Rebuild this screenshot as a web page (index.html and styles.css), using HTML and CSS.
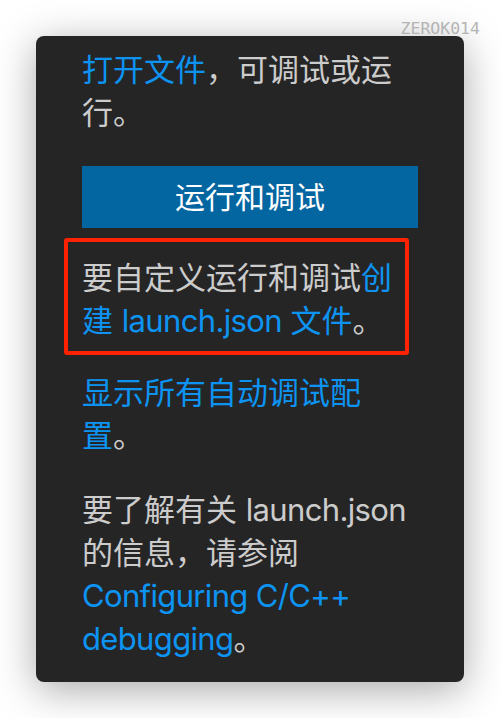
FILE: index.html
```html
<!DOCTYPE html>
<html lang="zh-CN">
<head>
<meta charset="utf-8">
<link rel="stylesheet" href="styles.css">
</head>
<body>
<div class="stage">
  <div class="watermark">ZEROK014</div>
  <div class="panel">
    <p class="para"><a class="link">打开文件</a>，可调试或运行。</p>
    <div class="btn">运行和调试</div>
    <div class="highlight">
      <p class="para">要自定义运行和调试<a class="link">创建 <span class="latin">launch.json</span> 文件</a>。</p>
    </div>
    <p class="para"><a class="link">显示所有自动调试配置</a>。</p>
    <p class="para">要了解有关 <span class="latin">launch.json</span> 的信息，请参阅 <a class="link latin">Configuring C/C++ debugging</a>。</p>
  </div>
</div>
</body>
</html>
```

FILE: styles.css
```css
html, body {
  margin: 0;
  padding: 0;
  background: #ffffff;
}
.stage {
  position: relative;
  width: 500px;
  height: 718px;
  padding: 36px;
  box-sizing: border-box;
}
.watermark {
  position: absolute;
  top: 19px;
  right: 20px;
  font-family: "DejaVu Sans Mono", monospace;
  font-size: 16.5px;
  color: #b4b4b4;
  letter-spacing: 0;
}
.panel {
  width: 428px;
  height: 646px;
  box-sizing: border-box;
  background: #252526;
  border-radius: 8px;
  box-shadow: 0 8px 40px rgba(0, 0, 0, 0.34);
  padding: 12px 46px 22px 46px;
  display: flex;
  flex-direction: column;
  font-family: Inter, "Noto Sans CJK SC", sans-serif;
  font-size: 31px;
  line-height: 43px;
  color: #cccccc;
}
.para {
  margin: 0;
}
.link {
  color: #0d94f2;
  text-decoration: none;
}
.latin {
  letter-spacing: -0.65px;
}
.btn {
  margin-top: 32px;
  height: 62px;
  background: #0466a1;
  color: #ffffff;
  display: flex;
  align-items: center;
  justify-content: center;
  font-size: 30px;
}
.highlight {
  margin: 10px 9px 0 -18px;
  border: 4px solid #ff2200;
  border-radius: 3px;
  padding: 14px 0 9px 14px;
}
.panel > .para + .para,
.highlight + .para {
  margin-top: 16px;
}
.panel > .para:last-child {
  margin-top: 31px;
}
```
